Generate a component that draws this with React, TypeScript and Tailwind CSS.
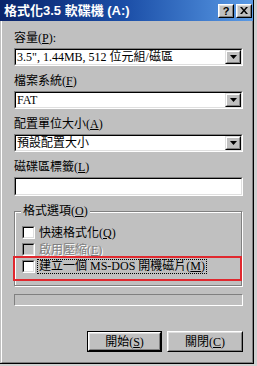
import React from "react";

const font = "font-['Liberation_Serif','Noto_Sans_CJK_TC',serif]";

function Sunken({ className = "", children }: { className?: string; children?: React.ReactNode }) {
  // classic 2px sunken field
  return (
    <div className={`border border-t-[#808080] border-l-[#808080] border-b-white border-r-white ${className}`}>
      <div className="h-full border border-t-black border-l-black border-b-[#dfdfdf] border-r-[#dfdfdf] bg-white flex items-center">
        {children}
      </div>
    </div>
  );
}

function Combo({ text }: { text: string }) {
  return (
    <Sunken className="h-[18px] w-[229px]">
      <span className="flex-1 pl-[1px] text-[12px] leading-[14px] text-black whitespace-nowrap">{text}</span>
      <div className="h-full w-[16px] border border-t-[#dfdfdf] border-l-[#dfdfdf] border-b-black border-r-black bg-[#c0c0c0]">
        <div className="h-full border border-t-white border-l-white border-b-[#808080] border-r-[#808080] flex items-center justify-center">
          <svg width="7" height="4" viewBox="0 0 7 4">
            <path d="M0 0h7L3.5 4z" fill="#000" />
          </svg>
        </div>
      </div>
    </Sunken>
  );
}

function Label({ main, acc, tail = "", className = "" }: { main: string; acc: string; tail?: string; className?: string }) {
  return (
    <div className={`h-[14px] text-[12px] leading-[14px] text-black whitespace-nowrap ${className}`}>
      {main}(<span className="underline">{acc}</span>){tail}
    </div>
  );
}

function CheckBox({ disabled = false }: { disabled?: boolean }) {
  return (
    <div className="w-[13px] h-[13px] border border-t-[#808080] border-l-[#808080] border-b-white border-r-white">
      <div
        className={`h-full border border-t-black border-l-black border-b-[#dfdfdf] border-r-[#dfdfdf] ${
          disabled ? "bg-[#c0c0c0]" : "bg-white"
        }`}
      />
    </div>
  );
}

function Btn({ label, acc, def = false, w }: { label: string; acc: string; def?: boolean; w: string }) {
  return (
    <div className={`h-[21px] ${w} ${def ? "border border-black" : ""}`}>
      <div className="h-full border border-t-white border-l-white border-b-black border-r-black">
        <div className="h-full border border-t-[#dfdfdf] border-l-[#dfdfdf] border-b-[#808080] border-r-[#808080] flex items-center justify-center text-[12px] leading-[14px] text-black">
          {label}(<span className="underline">{acc}</span>)
        </div>
      </div>
    </div>
  );
}

export default function App() {
  return (
    <div className={`w-[257px] h-[366px] bg-[#d0d0d0] ${font}`}>
      <div className="relative w-[254px] h-[364px] bg-[#c0c0c0] border-r border-b border-black flex flex-col">
        {/* title bar */}
        <div className="h-[21px] shrink-0 flex items-center bg-linear-to-r from-[#0a246a] via-[#1c4fa8] to-[#5b9be6] pl-[4px] pr-[1px]">
          <span className="text-white font-bold text-[13px] leading-[16px] whitespace-nowrap font-['Liberation_Sans','Noto_Sans_CJK_TC',sans-serif]">
            格式化3.5 軟碟機 (A:)
          </span>
          <div className="ml-auto flex gap-[2px]">
            <div className="w-[16px] h-[14px] bg-[#c0c0c0] border border-t-white border-l-white border-b-black border-r-black">
              <div className="h-full border border-t-[#dfdfdf] border-l-[#dfdfdf] border-b-[#808080] border-r-[#808080] flex items-center justify-center text-[11px] leading-[10px] font-bold text-black font-['Liberation_Sans',sans-serif]">
                ?
              </div>
            </div>
            <div className="w-[16px] h-[14px] bg-[#c0c0c0] border border-t-white border-l-white border-b-black border-r-black">
              <div className="h-full border border-t-[#dfdfdf] border-l-[#dfdfdf] border-b-[#808080] border-r-[#808080] flex items-center justify-center">
                <svg width="8" height="7" viewBox="0 0 8 7">
                  <path d="M0 0h2l2 2.5L6 0h2L5 3.5 8 7H6L4 4.5 2 7H0l3-3.5z" fill="#000" />
                </svg>
              </div>
            </div>
          </div>
        </div>

        {/* body */}
        <div className="flex-1 pl-px">
          <div className="h-full border-l border-white border-r border-r-[#808080] border-b border-b-[#808080] pl-[12px] pt-[10px] flex flex-col">
            <Label main="容量" acc="P" tail=":" />
            <div className="mt-[3px]">
              <Combo text={'3.5", 1.44MB, 512 位元組/磁區'} />
            </div>
            <Label main="檔案系統" acc="F" className="mt-[8px]" />
            <div className="mt-[3px]">
              <Combo text="FAT" />
            </div>
            <Label main="配置單位大小" acc="A" className="mt-[8px]" />
            <div className="mt-[3px]">
              <Combo text="預設配置大小" />
            </div>
            <Label main="磁碟區標籤" acc="L" className="mt-[8px]" />
            <div className="mt-[3px]">
              <Sunken className="h-[19px] w-[229px]" />
            </div>

            {/* group box */}
            <div className="relative mt-[15px] w-[228px] border border-[#808080] shadow-[inset_1px_1px_0_#fff,1px_1px_0_#fff] pt-[12px] pb-[10px] pl-[7px]">
              <div className="absolute left-[6px] -top-[8px] bg-[#c0c0c0] px-[2px] text-[12px] leading-[14px] text-black">
                格式選項(<span className="underline">O</span>)
              </div>
              <div className="h-[17px] flex items-center gap-[4px]">
                <CheckBox />
                <span className="text-[12px] leading-[14px] text-black">
                  快速格式化(<span className="underline">Q</span>)
                </span>
              </div>
              <div className="h-[17px] flex items-center gap-[4px]">
                <CheckBox disabled />
                <span className="text-[12px] leading-[14px] text-[#808080] [text-shadow:1px_1px_0_#fff]">
                  啟用壓縮(<span className="underline">E</span>)
                </span>
              </div>
              <div className="h-[17px] flex items-center gap-[2px]">
                <CheckBox />
                <span className="border border-dotted border-black px-[1px] text-[12px] leading-[13px] text-black whitespace-nowrap">
                  建立一個 MS-DOS 開機磁片(<span className="underline">M</span>)
                </span>
              </div>
            </div>

            {/* progress */}
            <div className="mt-[8px] w-[229px] h-[12px] border border-t-[#808080] border-l-[#808080] border-b-white border-r-white" />

            {/* buttons */}
            <div className="mt-[25px] w-[229px] flex justify-end gap-[5px]">
              <Btn label="開始" acc="S" def w="w-[75px]" />
              <Btn label="關閉" acc="C" w="w-[76px]" />
            </div>
          </div>
        </div>

        {/* red highlight */}
        <div className="absolute left-[13px] top-[256px] w-[229px] h-[25px] border-2 border-[#e0282e]" />
      </div>
    </div>
  );
}
